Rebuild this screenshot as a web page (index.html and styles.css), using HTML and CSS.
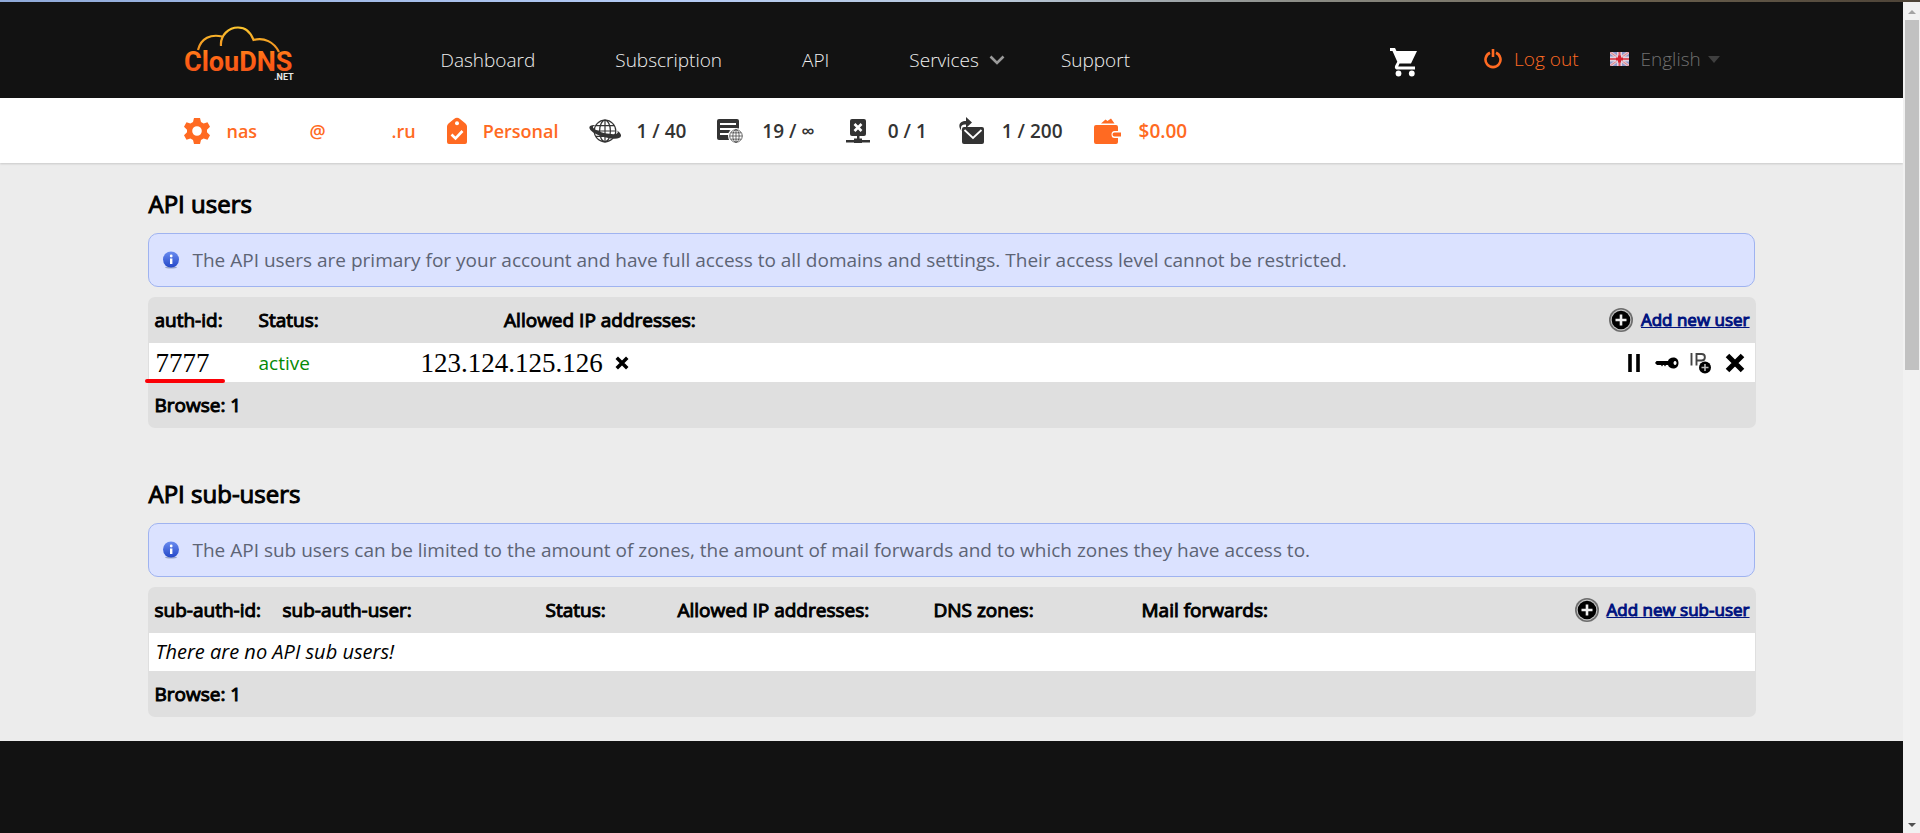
FILE: index.html
```html
<!DOCTYPE html>
<html lang="en">
<head>
<meta charset="utf-8">
<title>ClouDNS: API users</title>
<link rel="stylesheet" href="styles.css">
</head>
<body>
<svg class="sprite" aria-hidden="true">
  <defs>
    <linearGradient id="logo-word" x1="0" y1="0" x2="0" y2="1"><stop offset="0" stop-color="#ff8a1c"/><stop offset=".5" stop-color="#ff5c14"/><stop offset="1" stop-color="#e8571c"/></linearGradient>
    <linearGradient id="logo-cloud" gradientUnits="userSpaceOnUse" x1="0" y1="2" x2="0" y2="28"><stop offset="0" stop-color="#fdc82f"/><stop offset="1" stop-color="#f08a1e"/></linearGradient>
    <linearGradient id="info-fill" x1="0" y1="0" x2="0" y2="1"><stop offset="0" stop-color="#6a8cf0"/><stop offset="1" stop-color="#2448c8"/></linearGradient>
    <symbol id="globe" viewBox="0 0 20 20"><g fill="none" stroke="currentColor"><circle cx="10" cy="10" r="9"/><ellipse cx="10" cy="10" rx="4.500" ry="9"/><path d="M10 1v18M1 10h18M2.500 5.500h15M2.500 14.500h15"/></g></symbol>
    <symbol id="info" viewBox="0 0 18 18"><ellipse cx="9" cy="16.300" rx="6" ry="1.300" fill="#9aa6c8"/><circle cx="9" cy="8.500" r="8" fill="url(#info-fill)"/><rect x="8" y="7.500" width="2.400" height="5.500" fill="#fff"/><circle cx="9.200" cy="5" r="1.400" fill="#fff"/></symbol>
    <symbol id="add" viewBox="0 0 24 24"><circle cx="12" cy="12" r="12" fill="#6e6e6e"/><circle cx="12" cy="12" r="10.400" fill="#c4c4c4"/><circle cx="12" cy="12" r="9.300" fill="#000"/><path d="M12 6.500v11M6.500 12h11" stroke="#eee" stroke-width="2.600"/></symbol>
    <symbol id="cross" viewBox="0 0 20 20"><path d="M2.500 2.500l15 15M17.500 2.500l-15 15" stroke="#000" stroke-width="5"/></symbol>
  </defs>
</svg>
<div class="window-edge"></div>
<div class="viewport">
  <div class="page">
    <header class="header">
      <div class="container header-inner">
        <a class="logo" href="#" aria-label="ClouDNS.NET">
          <svg width="112" height="58" viewBox="0 0 112 58">
            <g fill="none" stroke="url(#logo-cloud)" stroke-width="2.200">
              <path d="M14 26C17 14 27 10 38 12.500"/>
              <path d="M37 22C36 11 45 3.500 54 3.500C62 3.500 67 9 69.500 16C80 13 90 18 95 28"/>
            </g>
            <text class="logo-word" x="0" y="47">ClouDNS</text>
            <text class="logo-net" x="90" y="56">.NET</text>
          </svg>
        </a>
        <nav class="nav">
          <a href="#">Dashboard</a>
          <a href="#">Subscription</a>
          <a href="#">API</a>
          <a class="nav-services" href="#">Services <svg width="16" height="10" viewBox="0 0 16 10"><path d="M1.500 1.500L8 8l6.500-6.500" fill="none" stroke="#9a9a9a" stroke-width="2.600"/></svg></a>
          <a href="#">Support</a>
        </nav>
        <div class="actions">
          <a class="cart" href="#" aria-label="Cart"><svg width="28" height="30" viewBox="0 0 28 30"><path d="M0 1h5l1.500 3H27l-6 12.500H9.500L8.200 19.500H25v3H7.500C4.500 22.500 4.500 20 5.500 18l1.800-3.200L2.500 4H0z" fill="#fff"/><circle cx="8.500" cy="26.500" r="2.900" fill="#fff"/><circle cx="21.800" cy="26.500" r="2.900" fill="#fff"/></svg></a>
          <a class="logout" href="#"><svg width="18" height="20" viewBox="0 0 18 20"><path d="M6 3.800A7.500 7.500 0 1 0 12 3.800M9 0v8" fill="none" stroke="currentColor" stroke-width="2.600"/></svg>Log out</a>
          <label class="language">
            <svg width="19" height="14" viewBox="0 0 19 14" role="img" aria-label="Language"><rect width="19" height="14" fill="#8c98cc"/><path d="M0 0l19 14M19 0L0 14" stroke="#e6c3cc" stroke-width="3"/><path d="M0 0l19 14M19 0L0 14" stroke="#d9808c"/><path d="M9.500 0v14M0 7h19" stroke="#dfd3e0" stroke-width="5"/><path d="M9.500 0v14M0 7h19" stroke="#dc5560" stroke-width="2"/><path d="M9.500 3.500v7M6 7h7" stroke="#d8202f" stroke-width="3"/></svg>
            <select><option>English</option></select>
            <svg width="12" height="7" viewBox="0 0 12 7"><path d="M0 0h12L6 7z" fill="#3f3f3f"/></svg>
          </label>
        </div>
      </div>
    </header>

    <div class="statusbar">
      <div class="container status-inner">
        <a class="status accent name" href="#">
          <svg width="26" height="28" viewBox="0 0 26 28"><path fill="currentColor" fill-rule="evenodd" d="M10 1h6l1 4 2.600 1.500L23.500 5.200l2.500 4.600-3 2.900v2.600l3 2.900-2.500 4.600-3.900-1.300L17 23l-1 4h-6l-1-4-2.600-1.500-3.900 1.300L0 18.200l3-2.900v-2.600L0 9.800l2.500-4.600 3.900 1.300L9 5zM13 9.200a4.800 4.800 0 1 0 0 9.600 4.800 4.800 0 0 0 0-9.600z"/></svg>
          <span class="account"><span>nas</span><span>@</span><span>.ru</span></span>
        </a>
        <a class="status accent name" href="#">
          <svg width="20" height="28" viewBox="0 0 20 28"><path fill="currentColor" d="M7 2q3-2.500 6 0l5.500 4.500Q20 8 20 9.500V25q0 2-2 2H2q-2 0-2-2V9.500Q0 8 1.500 6.500z"/><circle cx="10" cy="6.300" r="2" fill="#fff"/><path d="M4.500 17.500l4 4L15.500 14" fill="none" stroke="#fff" stroke-width="2.600"/></svg>
          Personal
        </a>
        <div class="status name count">
          <svg width="32" height="24" viewBox="0 0 32 24"><use href="#globe" x="4" y="0" width="24" height="24"/><path d="M7 6C-2 5-2 11 8 15.500s25 6.500 24 .5c-.5-2-2-3-4-4.500 3 4-3 4.500-13 2.500C4 11 1 7.500 7 6z" fill="currentColor"/></svg>
          1 / 40
        </div>
        <div class="status">
          <svg width="27" height="26" viewBox="0 0 27 26"><rect y="1" width="22" height="21" rx="2" fill="currentColor"/><path d="M3 6h16M3 11h15M3 16h9" stroke="#fff" stroke-width="1.800"/><circle cx="19" cy="18" r="8" fill="#fff"/><use href="#globe" x="12" y="11" width="14" height="14"/></svg>
          19 / ∞
        </div>
        <div class="status">
          <svg width="24" height="26" viewBox="0 0 24 26"><rect x="4" y="1" width="16" height="17" rx="2" fill="currentColor"/><path d="M8.500 6l7 7M15.500 6l-7 7" stroke="#fff" stroke-width="2.600"/><path d="M0 22h24v2.500H0z" fill="currentColor"/><path d="M11 17h2.500v3.500H16V25H8v-4.500h3z" fill="currentColor"/></svg>
          0 / 1
        </div>
        <div class="status">
          <svg width="26" height="28" viewBox="0 0 26 28"><rect x="4" y="10" width="22" height="17" rx="2" fill="currentColor"/><path d="M6.500 13l8.500 8 8.500-8" fill="none" stroke="#fff" stroke-width="1.800"/><path d="M3.500 14C-1 8 2 4 8 4V0l6 5.500L8 11V7.500C3.500 7 2 9.500 3.500 14z" fill="currentColor"/></svg>
          1 / 200
        </div>
        <a class="status accent" href="#">
          <svg width="27" height="28" viewBox="0 0 27 28"><path d="M2 8h20q2 0 2 2v4h-3.500q-3 0-3 3.500t3 3.500H24v4q0 2-2 2H2q-2 0-2-2V10q0-2 2-2z" fill="currentColor"/><path d="M20.500 15.500H27v4h-6.500q-2 0-2-2t2-2zM7 6.500l4.500-4 2 1.500L17 1.500l3.500 5z" fill="currentColor"/></svg>
          $0.00
        </a>
      </div>
    </div>

    <main class="container main">
      <section class="section">
        <h1>API users</h1>
        <p class="notice"><svg width="18" height="18"><use href="#info"/></svg>The API users are primary for your account and have full access to all domains and settings. Their access level cannot be restricted.</p>
        <table class="grid">
          <colgroup><col class="w-104"><col class="w-162"><col class="w-371"><col></colgroup>
          <thead>
            <tr><th>auth-id:</th><th>Status:</th><th class="center">Allowed IP addresses:</th><th><a class="add" href="#"><svg width="24" height="24"><use href="#add"/></svg><span>Add new user</span></a></th></tr>
          </thead>
          <tbody>
            <tr>
              <td class="typed marked">7777</td>
              <td class="ok">active</td>
              <td class="typed"><span class="ip">123.124.125.126 <button aria-label="Remove IP"><svg width="14" height="14"><use href="#cross"/></svg></button></span></td>
              <td>
                <div class="tools">
                  <button aria-label="Pause"><svg width="12" height="18" viewBox="0 0 12 18"><path d="M2 0v18M10 0v18" stroke="#000" stroke-width="3.600"/></svg></button>
                  <button aria-label="Change password"><svg width="24" height="14" viewBox="0 0 24 14"><path fill="#000" fill-rule="evenodd" d="M1.500 5H13C14 .5 23.500-.5 23.500 7S14 13.500 13 9h-2l-1 1.500L9 9H8l-1 1.500L6 9H2L0 7zM20 5a1.500 2 0 1 0 .1 0z"/></svg></button>
                  <button aria-label="Add IP"><svg width="22" height="22" viewBox="0 0 22 22"><path d="M1.500 1v12.500M6.500 13.500V2h5c4.500 0 4.500 6.500 0 6.500h-5" fill="none" stroke="#444" stroke-width="1.900"/><circle cx="15" cy="15.500" r="6" fill="#000"/><path d="M15 12v7M11.500 15.500h7" stroke="#bbb" stroke-width="1.600"/></svg></button>
                  <button aria-label="Delete"><svg width="20" height="20"><use href="#cross"/></svg></button>
                </div>
              </td>
            </tr>
          </tbody>
          <tfoot><tr><th colspan="4">Browse: 1</th></tr></tfoot>
        </table>
      </section>

      <section class="section">
        <h2>API sub-users</h2>
        <p class="notice"><svg width="18" height="18"><use href="#info"/></svg>The API sub users can be limited to the amount of zones, the amount of mail forwards and to which zones they have access to.</p>
        <table class="grid">
          <colgroup><col class="w-128"><col class="w-263"><col class="w-132"><col class="w-256"><col class="w-208"><col class="w-208"><col></colgroup>
          <thead>
            <tr><th>sub-auth-id:</th><th>sub-auth-user:</th><th>Status:</th><th>Allowed IP addresses:</th><th>DNS zones:</th><th>Mail forwards:</th><th><a class="add" href="#"><svg width="24" height="24"><use href="#add"/></svg><span>Add new sub-user</span></a></th></tr>
          </thead>
          <tbody><tr><td class="empty" colspan="7">There are no API sub users!</td></tr></tbody>
          <tfoot><tr><th colspan="7">Browse: 1</th></tr></tfoot>
        </table>
      </section>
    </main>

    <footer class="footer"></footer>
  </div>
  <div class="scrollbar" aria-hidden="true">
    <svg width="17" height="18" viewBox="0 0 17 18"><path d="M5 12h8L9 8z" fill="#a3a3a3"/></svg>
    <div class="track"><div class="thumb"></div></div>
    <svg width="17" height="17" viewBox="0 0 17 17"><path d="M5 7h8l-4 4z" fill="#505050"/></svg>
  </div>
</div>
</body>
</html>
```

FILE: styles.css
```css
* {
  box-sizing: border-box;
}

body {
  margin: 0;
  min-height: 100vh;
  display: flex;
  flex-direction: column;
  background: #ececec;
  color: #000;
  font-family: "Open Sans", "Noto Sans", sans-serif;
  font-size: 19px;
  line-height: 26px;
}

svg {
  display: block;
  flex: none;
}

a {
  color: inherit;
  text-decoration: none;
}

button,
select {
  margin: 0;
  padding: 0;
  border: 0;
  background: none;
  color: inherit;
  font: inherit;
}

button {
  cursor: pointer;
}

.sprite {
  position: absolute;
  width: 0;
  height: 0;
}

.window-edge {
  height: 2px;
  background: linear-gradient(90deg, #8fa9d8, #b4cbf5 35%, #b9c8da 52%, #8b8c85 68%, #6a604e 85%, #4d4337);
}

.viewport {
  flex: 1;
  display: flex;
}

.page {
  flex: 1;
  min-width: 0;
  display: flex;
  flex-direction: column;
}

.container {
  width: 84.5%;
  margin: 0 auto;
}

/* Header */
.header {
  background: #121212;
  color: #f0f0f0;
  font-weight: 300;
}

.header-inner {
  display: flex;
  align-items: center;
  padding: 22px 36px 16px 37px;
}

.logo-word {
  fill: url(#logo-word);
  font: 700 27px Roboto, sans-serif;
}

.logo-net {
  fill: #e8e8e8;
  font: 700 9px Roboto, sans-serif;
}

.nav {
  display: flex;
  gap: 80px;
  margin-left: 144px;
  padding-top: 14px;
}

.nav-services {
  display: flex;
  align-items: center;
  gap: 10px;
  margin-right: -24px;
}

.actions {
  display: flex;
  align-items: center;
  margin-left: auto;
  padding-top: 12px;
}

.cart {
  padding-top: 6px;
}

.logout {
  display: flex;
  align-items: center;
  gap: 12px;
  margin-left: 66px;
  color: #ff6a22;
}

.language {
  display: flex;
  align-items: center;
  margin-left: 31px;
  color: #707070;
}

.language select {
  appearance: none;
  margin: 0 6px 0 12px;
}

/* Status bar */
.statusbar {
  background: #fff;
  box-shadow: 0 1px 2px #00000026;
  color: #333;
  font-weight: 600;
}

.status-inner {
  display: flex;
  align-items: center;
  gap: 31px;
  height: 65px;
  padding: 0 37px;
}

.status {
  display: flex;
  align-items: center;
  gap: 18px;
  white-space: nowrap;
}

.accent {
  color: #ff6a22;
}

.name {
  gap: 16px;
  font-size: 18px;
}

.count {
  gap: 15px;
  font-size: 19px;
}

.account {
  display: grid;
  grid-template-columns: 83px 82px auto;
}

/* Sections */
.main {
  padding: 24px 0 24px 1px;
}

.section + .section {
  margin-top: 49px;
}

h1,
h2,
.grid th {
  font-weight: 400;
  -webkit-text-stroke: 1px currentColor;
}

h1,
h2 {
  margin: 0 0 12px;
  font-size: 24px;
  line-height: 34px;
}

.notice {
  display: flex;
  align-items: center;
  gap: 12px;
  margin: 0 1px 10px 0;
  padding: 13px;
  border: 1px solid #9fb3f0;
  border-radius: 10px;
  background: #dbe2ff;
  color: #5d6475;
}

.grid {
  width: 100%;
  table-layout: fixed;
  border-collapse: separate;
  border-spacing: 0;
  border-radius: 7px;
  background: #dfdfdf;
}

.grid th,
.grid td {
  height: 46px;
  padding: 0 6px;
  text-align: left;
}

.grid td {
  height: 39px;
  background: #fff;
}

.grid td:first-child {
  border-left: 1px solid #dfdfdf;
}

.grid td:last-child {
  border-right: 1px solid #dfdfdf;
}

.grid .center {
  text-align: center;
}

.w-104 { width: 104px; }
.w-128 { width: 128px; }
.w-132 { width: 132px; }
.w-162 { width: 162px; }
.w-208 { width: 208px; }
.w-256 { width: 256px; }
.w-263 { width: 263px; }
.w-371 { width: 371px; }

.add {
  display: flex;
  align-items: center;
  justify-content: flex-end;
  gap: 8px;
  color: #00137f;
  font-size: 17px;
}

.add span {
  text-decoration: underline;
}

.grid .typed {
  font-family: "Liberation Serif", serif;
  font-size: 27px;
}

.marked {
  position: relative;
}

.marked::after {
  content: "";
  position: absolute;
  left: -4px;
  bottom: -1px;
  width: 80px;
  height: 4px;
  border-radius: 2px;
  background: #fb0007;
}

.ok {
  color: #058a05;
}

.ip {
  display: flex;
  align-items: center;
  gap: 12px;
}

.tools {
  display: flex;
  align-items: center;
  justify-content: flex-end;
  gap: 15px;
  padding-right: 4px;
}

.tools button:nth-child(3) {
  margin: 0 -2px 0 -4px;
}

.grid .empty {
  height: 38px;
  font-size: 20px;
  font-style: italic;
}

.footer {
  flex: 1;
  background: #121212;
}

/* Scrollbar */
.scrollbar {
  display: flex;
  flex-direction: column;
  background: #f1f1f1;
}

.track {
  flex: 1;
  padding: 0 1px 0 2px;
}

.thumb {
  height: 44%;
  background: #c1c1c1;
}
```
